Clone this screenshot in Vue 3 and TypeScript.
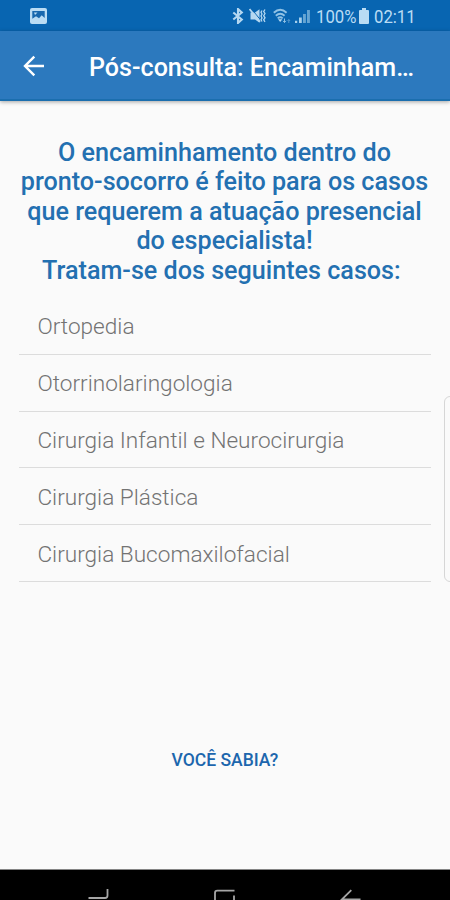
<script setup lang="ts">
const title: string = 'Pós-consulta: Encaminham…'

const introLines: string[] = [
  'O encaminhamento dentro do',
  'pronto-socorro é feito para os casos',
  'que requerem a atuação presencial',
  'do especialista!',
  'Tratam-se dos seguintes casos:\u00a0',
]

const specialties: string[] = [
  'Ortopedia',
  'Otorrinolaringologia',
  'Cirurgia Infantil e Neurocirurgia',
  'Cirurgia Plástica',
  'Cirurgia Bucomaxilofacial',
]
</script>

<template>
  <div class="screen">
    <div class="status">
      <svg class="picture" viewBox="0 0 17 16" width="17" height="16">
        <path d="M2 0h13q2 0 2 2v12q0 2-2 2H2q-2 0-2-2V2q0-2 2-2z" fill="#b9dcf4" />
        <path d="M2.3 3h12.4v7l-3-2.8-2.7 3-3-2-3.7 2.5z" fill="#1768ae" />
        <path d="M4 4.5h3.5L5 7z" fill="#b9dcf4" />
      </svg>
      <div class="indicators">
        <svg class="bluetooth" viewBox="0 0 12 16" width="12" height="16" fill="none" stroke="#b5d8f1" stroke-width="2.1">
          <path d="M1.3 4.5l8.5 7L6 15V1l3.8 3.5-8.5 7" />
        </svg>
        <svg class="mute" viewBox="0 0 18 16" width="18" height="16">
          <path d="M1.5 4.5H6l4.5-3.3v13.6L6 11.5H1.5z" fill="#b5d8f1" />
          <path d="M1.7 0L12 12.5" stroke="#0865b1" stroke-width="1" />
          <path d="M.5 1L11 13.8" stroke="#b5d8f1" stroke-width="1.8" />
          <path d="M13 2.5l-1 1.7 1 1.8-1 2 1 2-1 1.8 1 1.7M16 1.5l-1.3 2 1.3 2-1.3 2.2 1.3 2.1-1.3 2 1.3 2" fill="none" stroke="#b5d8f1" stroke-width="1.3" />
        </svg>
        <svg class="wifi" viewBox="0 0 18 16" width="18" height="16" fill="none" stroke="#91c2e5" stroke-width="1.9">
          <path d="M.8 4.7q6.4-6 12.8 0M2.8 7.7q4.4-4 8.8 0M4.7 10.4q2.5-2.3 5 0" />
          <path d="M5 11.3L7.2 14l2.2-2.7z" fill="#b5d8f1" stroke="none" />
          <path d="M11.5 10.5v4M10 12.8l1.5 1.7 1.5-1.7" stroke-width="1" />
          <path d="M15.8 15v-3.5M14.5 13l1.3-1.5 1.3 1.5" stroke="#5798cb" stroke-width="1" />
        </svg>
        <svg class="signal" viewBox="0 0 15 16" width="15" height="16">
          <path d="M0 12.7h2.2V15H0zM4 9.5h2.8V15H4z" fill="#a5cfec" />
          <path d="M8 6h2.9v9H8zM12 2h2.9v13H12z" fill="#66a5d3" />
        </svg>
        <span class="percent"><span>100%</span></span>
        <svg class="battery" viewBox="0 0 10 16" width="10" height="16">
          <path d="M3 0h4v2h2q1 0 1 1v12q0 1-1 1H1q-1 0-1-1V3q0-1 1-1h2z" fill="#b9dcf4" />
        </svg>
        <span class="clock"><span>02:11</span></span>
      </div>
    </div>

    <header class="appbar">
      <svg class="back" viewBox="0 0 22 22" width="22" height="22" fill="none" stroke="#fff" stroke-width="2.4">
        <path d="M21 11H2M11.3 1.7L2 11l9.3 9.3" />
      </svg>
      <h1>{{ title }}</h1>
    </header>

    <main class="content">
      <div class="intro">
        <div v-for="line in introLines" :key="line">{{ line }}</div>
      </div>
      <ul class="list">
        <li v-for="item in specialties" :key="item"><span>{{ item }}</span></li>
      </ul>
      <button class="more" type="button">VOCÊ SABIA?</button>
      <div class="edge-panel"></div>
    </main>

    <footer class="navbar">
      <svg viewBox="0 0 450 30" width="450" height="30" fill="none" stroke="#a6a6a6" stroke-width="1.8">
        <path d="M88.5 28H105q2.5 0 2.5-2.5V19" />
        <path d="M215 30v-7q0-2.3 2.3-2.3H234.5M234 25.5V30" />
        <path d="M360.5 29.3H342L351.3 20.2" />
      </svg>
    </footer>
  </div>
</template>

<style>
body {
  margin: 0;
}
</style>

<style scoped>
.screen {
  width: 450px;
  height: 900px;
  display: flex;
  flex-direction: column;
  overflow: hidden;
  background: #fafafa;
  font-family: Roboto, "Liberation Sans", sans-serif;
}

svg {
  display: block;
  flex: none;
}

.status {
  height: 31px;
  box-sizing: border-box;
  flex: none;
  display: flex;
  align-items: flex-start;
  justify-content: space-between;
  padding: 8px 35px 0 30px;
  background: #0865b1;
}

.indicators {
  display: flex;
  height: 16px;
  align-items: center;
  color: #b9dcf4;
  font-size: 19px;
  line-height: 16px;
}

.mute {
  margin-left: 5px;
}

.wifi {
  margin-left: 6px;
}

.signal {
  margin-left: 4px;
}

.percent {
  width: 40px;
  margin-left: 6px;
}

.battery {
  margin-left: 3px;
}

.clock {
  width: 41px;
  margin-left: 5px;
}

.percent,
.clock {
  padding-top: 1px;
  white-space: nowrap;
}

.percent span,
.clock span {
  display: inline-block;
  transform: scaleX(0.88);
  transform-origin: left;
}

.appbar {
  height: 70px;
  box-sizing: border-box;
  flex: none;
  display: flex;
  align-items: center;
  padding: 2px 0 0 23px;
  background: #2c79be;
  border-bottom: 2px solid #1b6eae;
  box-shadow: 0 1px 4px rgba(0, 0, 0, 0.35);
  z-index: 1;
}

h1 {
  margin: 3px 0 0 44px;
  color: #fff;
  font-size: 25.1px;
  line-height: 30px;
  font-weight: 500;
  white-space: nowrap;
}

.content {
  position: relative;
  flex: 1;
  display: flex;
  flex-direction: column;
  align-items: center;
  padding-top: 36.5px;
}

.intro {
  padding-right: 1px;
  color: #2370b1;
  font-size: 25.15px;
  font-weight: 500;
  line-height: 29.5px;
  text-align: center;
  white-space: nowrap;
}

.list {
  width: 412px;
  margin: 13px 0 0;
  padding: 0;
  list-style: none;
}

.list li {
  height: 56.8px;
  box-sizing: border-box;
  display: flex;
  align-items: center;
  padding: 2px 0 0 18.4px;
  border-bottom: 1px solid #dcdcdc;
  color: #737373;
  font-size: 22.6px;
  font-weight: 300;
  white-space: nowrap;
}

.more {
  margin-top: 166.5px;
  padding: 0;
  border: 0;
  background: none;
  color: #1c66ad;
  font: 500 17.5px/24px Roboto, "Liberation Sans", sans-serif;
  white-space: nowrap;
}

.edge-panel {
  position: absolute;
  top: 295px;
  right: -8px;
  width: 14px;
  height: 186px;
  box-sizing: border-box;
  border: 1px solid #d6d6d6;
  border-radius: 6px;
}

.navbar {
  height: 31px;
  box-sizing: border-box;
  flex: none;
  border-top: 1px solid #858585;
  background: #000;
}
</style>
